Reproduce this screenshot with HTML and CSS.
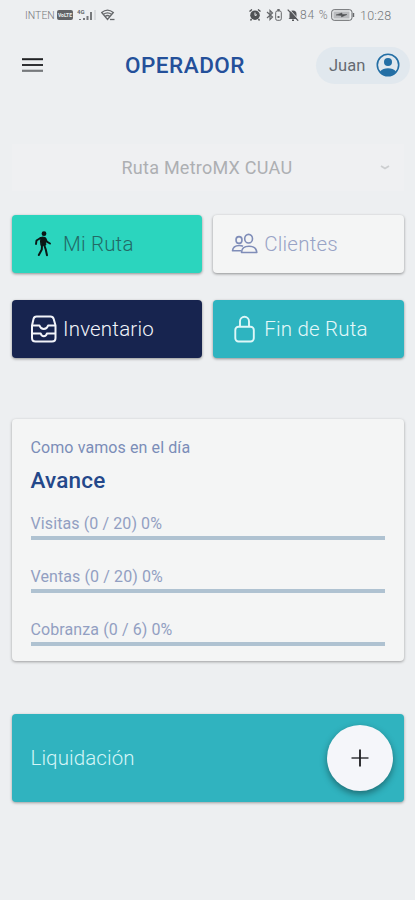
FILE: index.html
```html
<!DOCTYPE html>
<html lang="es">
<head>
    <meta charset="UTF-8">
    <meta name="viewport" content="width=device-width, initial-scale=1.0">
    <title>Operador</title>
    <link rel="stylesheet" href="styles.css">
</head>
<body>
    <div class="status-bar">
        <div class="status-left">
            <span class="carrier">INTEN</span>
            <span class="volte">VoLTE</span>
            <svg class="signal" width="20" height="12" viewBox="0 0 20 12">
                <text x="0" y="5" class="network">4G</text>
                <path d="M3 11v-1M7 11V9M10.500 11V7M14 11V3" stroke="#77797c" stroke-width="2"/>
                <path d="M18 11V1" stroke="#d9dbde" stroke-width="2"/>
            </svg>
            <svg class="wifi" width="14" height="12" viewBox="0 0 14 12" fill="none" stroke="#66686b" stroke-width="1.300">
                <path d="M.7 3.500Q6.500-1.300 12.300 3.500L6.500 10.500ZM2.500 5.300q4-3 8 0M4.300 7.300q2.200-1.600 4.400 0"/>
                <path d="M9 10.500h4.500"/>
            </svg>
        </div>
        <div class="status-right">
            <svg class="alarm" width="12" height="12" viewBox="0 0 12 12">
                <path d="M.5 2.500 3 .5M11.500 2.500 9 .5M2.500 10l-1 1.500M9.500 10l1 1.500" stroke="#505255" stroke-width="1.400"/>
                <circle cx="6" cy="6.200" r="4.800" fill="#505255"/>
                <path d="M6 3.500v3l2-.8" fill="none" stroke="#edeff1"/>
            </svg>
            <svg class="bluetooth" width="8" height="12" viewBox="0 0 8 12" fill="none" stroke="#66686b" stroke-width="1.200">
                <path d="m1 3 5.500 5L4 10.500v-9L6.500 4 1 9"/>
            </svg>
            <svg class="device-battery" width="7" height="12" viewBox="0 0 7 12" fill="none" stroke="#66686b">
                <rect x=".7" y="2" width="5.600" height="9.300" rx="1.500"/>
                <path d="M2.300 1h2.400M2.500 8h2" stroke-width="1.800"/>
            </svg>
            <svg class="muted" width="12" height="12" viewBox="0 0 12 12">
                <path d="M2.500 9V5a3.500 3.500 0 0 1 7 0v4l1 1h-9ZM5 10.500h2V12H5Z" fill="#55575a"/>
                <path d="m2 0 10 11" stroke="#edeff1"/>
                <path d="m.7.7 10.500 11" stroke="#55575a" stroke-width="1.200"/>
            </svg>
            <span class="percent">84 %</span>
            <svg class="battery" width="24" height="12" viewBox="0 0 24 12" fill="none" stroke="#66686b">
                <rect x=".7" y=".7" width="20.300" height="10.600" rx="2.500"/>
                <rect x="2.500" y="2.500" width="16" height="7" fill="#b9bbbe" stroke="none"/>
                <path d="M22.500 4v4" stroke-width="1.400"/>
                <path d="m5 6 6-2v1.500h5L10.500 8V6.500Z" fill="#505255" stroke="#505255" stroke-width=".5"/>
            </svg>
            <span class="clock">10:28</span>
        </div>
    </div>

    <header class="header">
        <button class="menu" aria-label="Menú">
            <svg width="21" height="16" viewBox="0 0 21 16">
                <path d="M0 2.200h21" stroke="#202124" stroke-width="2"/>
                <path d="M0 8h21" stroke="#303134" stroke-width="2"/>
                <path d="M0 13.800h21" stroke="#77797c" stroke-width="2.200"/>
            </svg>
        </button>
        <h1 class="title">OPERADOR</h1>
        <div class="user">
            <span>Juan</span>
            <svg width="24" height="24" viewBox="0 0 24 24">
                <circle cx="12" cy="12" r="10.700" fill="none" stroke="#246fa5" stroke-width="1.600"/>
                <circle cx="12" cy="9" r="4" fill="#246fa5"/>
                <path d="M4 18.500Q7 15.300 12 15.300t8 3.200Q17 22.500 12 22.500T4 18.500Z" fill="#246fa5"/>
            </svg>
        </div>
    </header>

    <main class="content">
        <div class="route-select">
            <span>Ruta MetroMX CUAU</span>
            <svg width="10" height="6" viewBox="0 0 10 6" fill="none" stroke="#ccced0" stroke-width="1.800">
                <path d="m1 1 4 2.500 4-2.500"/>
            </svg>
        </div>

        <div class="tiles">
            <button class="tile tile-route">
                <svg width="28" height="28" viewBox="0 0 28 28" fill="none" stroke="#0b1716" stroke-linecap="round" stroke-linejoin="round">
                    <circle cx="14" cy="3.700" r="2.400" fill="#0b1716" stroke="none"/>
                    <path d="M10.500 7.500q2.300-1 4.600 0l.7 7.500-4.500.5Z" fill="#0b1716" stroke-width="1"/>
                    <path d="M10.500 8 6.500 10.500 6 14M15.500 8.500l1.300 3.200 3.200 1.800" stroke-width="1.900"/>
                    <path d="m12 15-.2 4.500-3 5.500M14 14.500l1.800 5.200 1.200 5.500" stroke-width="2"/>
                </svg>
                <span>Mi Ruta</span>
            </button>
            <button class="tile tile-clients">
                <svg width="28" height="28" viewBox="0 0 28 28" fill="none" stroke="#7f8db8" stroke-width="1.600" stroke-linejoin="round">
                    <ellipse cx="17.600" cy="8.700" rx="3.900" ry="4.300"/>
                    <path d="M10.500 22.500q.2-6.200 7.500-6.200t7.800 6.200Z"/>
                    <ellipse cx="8" cy="10" rx="3" ry="3.400"/>
                    <path d="M12 16.300q-1.600-.8-3.700-.8-6.300 0-6.800 5.300h9"/>
                </svg>
                <span>Clientes</span>
            </button>
            <button class="tile tile-stock">
                <svg width="28" height="28" viewBox="0 0 28 28" fill="none" stroke="#f2f4fa" stroke-width="2" stroke-linejoin="round">
                    <path d="M6.500 1.500h14q2.500 0 3.200 2.500L25.500 10.500V23q0 3.500-3.500 3.500H5.500Q2 26.500 2 23V10.500L3.500 4Q4.100 1.500 6.500 1.500Z"/>
                    <path d="M2.500 10.500h7q1.200 3.600 4.300 3.600t4.300-3.600h7M2 18.500h8.700q.7 2.700 3.100 2.700t3.100-2.700h8.600"/>
                </svg>
                <span>Inventario</span>
            </button>
            <button class="tile tile-end">
                <svg width="28" height="28" viewBox="0 0 28 28" fill="none" stroke="#dff7f8" stroke-width="1.900">
                    <rect x="4.300" y="11.700" width="18.500" height="14.800" rx="3.200"/>
                    <path d="M9 11.500V6.300a4.500 4.500 0 0 1 9 0v5.200"/>
                </svg>
                <span>Fin de Ruta</span>
            </button>
        </div>

        <section class="progress-card">
            <p class="subtitle">Como vamos en el día</p>
            <h2 class="card-title">Avance</h2>
            <div class="progress">
                <span>Visitas (0 / 20) 0%</span>
                <div class="bar"></div>
            </div>
            <div class="progress">
                <span>Ventas (0 / 20) 0%</span>
                <div class="bar"></div>
            </div>
            <div class="progress">
                <span>Cobranza (0 / 6) 0%</span>
                <div class="bar"></div>
            </div>
        </section>

        <section class="settlement">
            <span>Liquidación</span>
            <button class="add" aria-label="Agregar">
                <svg width="18" height="18" viewBox="0 0 18 18">
                    <path d="M.5 9h17" stroke="#66676b" stroke-width="2"/>
                    <path d="M9 .5v17" stroke="#1c1c1f" stroke-width="1.800"/>
                </svg>
            </button>
        </section>
    </main>
</body>
</html>
```

FILE: styles.css
```css
* {
    box-sizing: border-box;
    margin: 0;
    padding: 0;
}

body {
    height: 900px;
    background-color: #edeff1;
    font-family: Roboto, "Liberation Sans", sans-serif;
    overflow: hidden;
}

button {
    border: none;
    font-family: inherit;
    cursor: pointer;
}

svg {
    display: block;
    flex-shrink: 0;
}

.status-bar {
    display: flex;
    justify-content: space-between;
    height: 30px;
    padding: 0 23px 0 25px;
    color: #77797c;
}

.status-left, .status-right {
    display: flex;
    align-items: center;
}

.carrier {
    width: 32px;
    font-size: 10.5px;
    font-weight: 300;
}

.volte {
    width: 16px;
    height: 10px;
    border-radius: 2px;
    background-color: #626467;
    color: #edeff1;
    font-size: 5px;
    font-weight: 700;
    line-height: 10px;
    text-align: center;
}

.signal {
    margin-left: 4px;
}

.network {
    font-size: 6px;
    font-weight: 700;
    fill: #66686b;
}

.wifi {
    margin-left: 4px;
}

.bluetooth {
    margin-left: 5px;
}

.device-battery {
    margin-left: 1px;
}

.muted {
    margin-left: 5px;
}

.percent {
    width: 31px;
    margin-left: 1px;
    font-size: 12px;
    font-weight: 300;
    letter-spacing: 0.8px;
    white-space: nowrap;
}

.clock {
    width: 32px;
    margin-left: 5px;
    font-size: 12.5px;
    font-weight: 300;
    letter-spacing: 0.2px;
    white-space: nowrap;
}

.header {
    display: grid;
    grid-template-columns: 103px 1fr 94px;
    align-items: center;
    height: 70px;
    padding: 0 5px 0 22px;
}

.menu {
    width: 21px;
    background: none;
}

.title {
    color: #24509a;
    font-size: 22.5px;
    font-weight: 500;
    letter-spacing: 0.5px;
}

.user {
    display: flex;
    align-items: center;
    justify-content: space-between;
    height: 37px;
    padding: 0 10px 0 13px;
    border-radius: 19px;
    background-color: #e1e8ee;
    color: #666b72;
    font-size: 16.5px;
}

.content {
    padding: 44px 11.5px 0 12px;
}

.route-select {
    display: flex;
    align-items: center;
    height: 47px;
    padding: 0 14px 0 109.5px;
    background-color: #eff0f2;
    color: #adafb2;
    font-size: 18px;
    letter-spacing: 0.25px;
}

.route-select svg {
    margin-left: auto;
}

.tiles {
    display: grid;
    grid-template-columns: 1fr 1fr;
    gap: 27px 11px;
    margin-top: 24px;
}

.tile {
    display: flex;
    align-items: center;
    gap: 5px;
    height: 58px;
    padding: 0 18px;
    border-radius: 4px;
    box-shadow: 0 1px 3px rgba(0, 0, 0, 0.4);
    font-size: 20.5px;
    font-weight: 300;
    letter-spacing: 0.2px;
}

.tile-route {
    background-color: #2bd5be;
    color: #226a66;
}

.tile-clients {
    background-color: #f4f5f5;
    color: #98a3c6;
}

.tile-stock {
    background-color: #17244f;
    color: #f2f4fa;
}

.tile-end {
    background-color: #2eb4c0;
    color: #e4f8f9;
}

.progress-card {
    height: 242px;
    margin-top: 61px;
    padding: 19px 18.5px 0;
    border-radius: 4px;
    background-color: #f4f5f5;
    box-shadow: 0 1px 3px rgba(0, 0, 0, 0.35);
}

.subtitle {
    color: #7b8db8;
    font-size: 16px;
    letter-spacing: 0.1px;
    line-height: 19px;
}

.card-title {
    margin-top: 9px;
    color: #24488a;
    font-size: 22.5px;
    font-weight: 500;
    letter-spacing: 0.2px;
    line-height: 28px;
}

.progress {
    height: 53px;
    padding-top: 20px;
    color: #929fc2;
    font-size: 16px;
    letter-spacing: 0.1px;
    line-height: 20px;
}

.bar {
    height: 4px;
    margin-top: 2px;
    background-color: #afc2d1;
}

.settlement {
    display: flex;
    align-items: center;
    justify-content: space-between;
    height: 88px;
    margin-top: 53px;
    padding: 0 11px 0 18.5px;
    border-radius: 4px;
    background-color: #30b3bf;
    box-shadow: 0 1px 3px rgba(0, 0, 0, 0.35);
    color: #d5f5f7;
    font-size: 20.5px;
    font-weight: 300;
    letter-spacing: 0.1px;
}

.add {
    display: flex;
    align-items: center;
    justify-content: center;
    width: 66px;
    height: 66px;
    border-radius: 50%;
    background-color: #f5f6fa;
    box-shadow: 0 3px 7px rgba(0, 0, 0, 0.4);
}
```
